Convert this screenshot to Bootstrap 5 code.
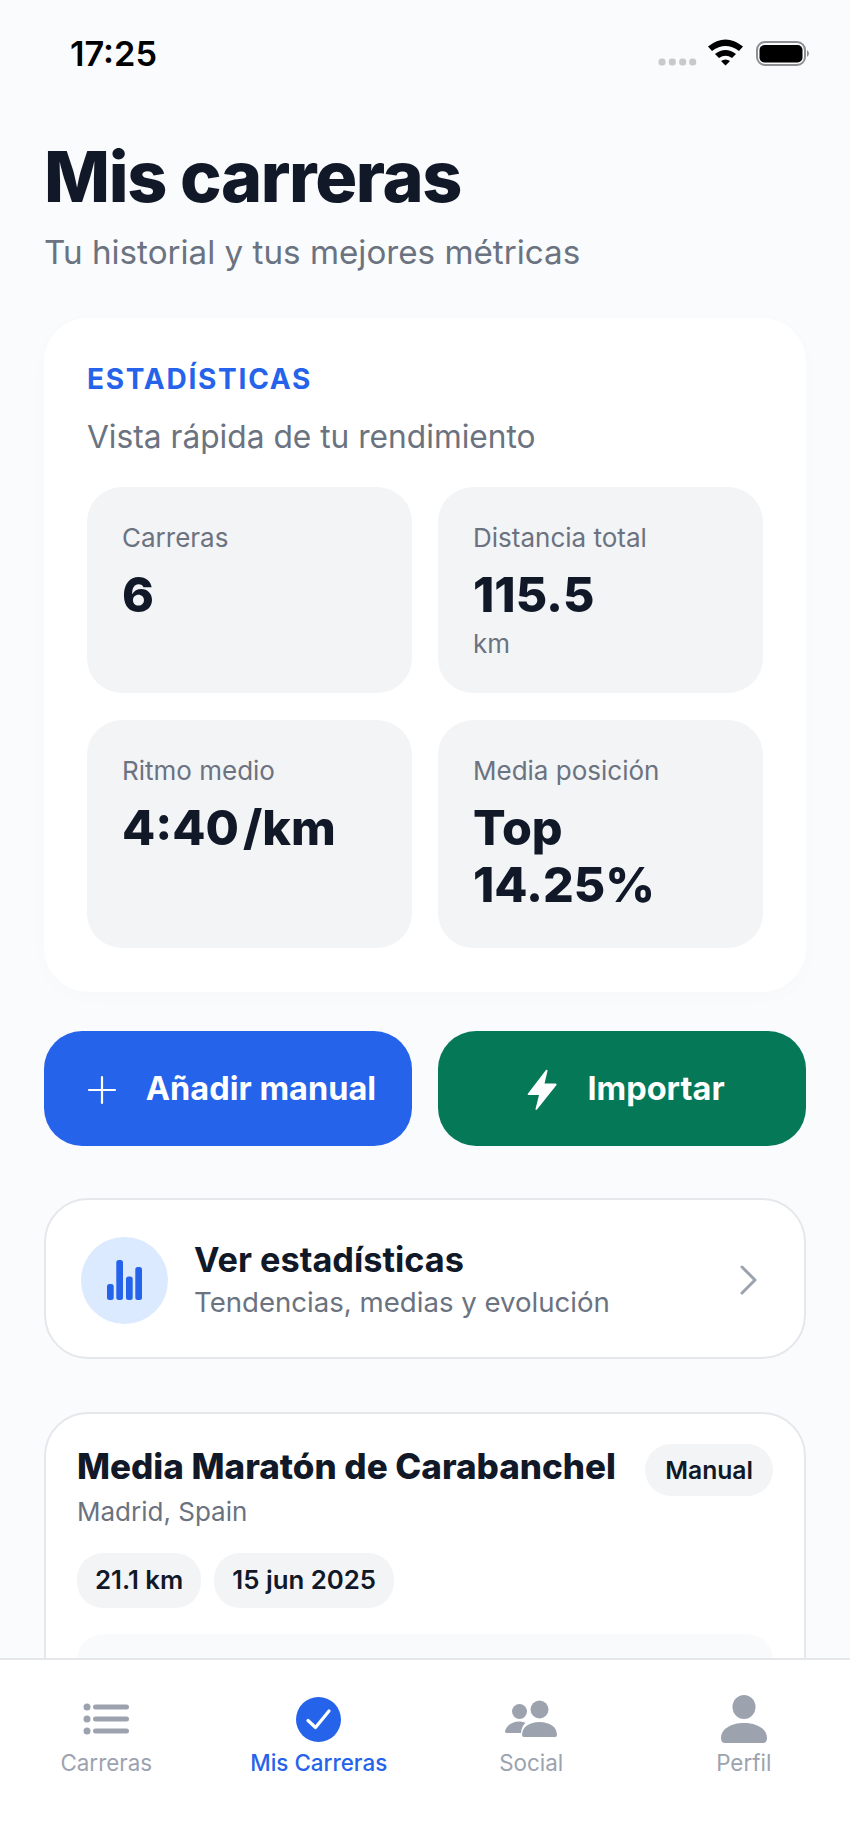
<!DOCTYPE html>
<html lang="es">
<head>
  <meta charset="UTF-8">
  <meta name="viewport" content="width=device-width, initial-scale=1">
  <title>Mis carreras</title>
  <link href="https://cdn.jsdelivr.net/npm/bootstrap@5.3.3/dist/css/bootstrap.min.css" rel="stylesheet">
  <style>
    html, body { height: 1839px; overflow: hidden; }
    body { background: #f9fbfd; font-family: Inter, "Liberation Sans", sans-serif; color: #111827; }
    .phone { height: 1839px; position: relative; overflow: hidden; }
    .status-row { height: 88px; padding: 31px 38px 0 70px; }
    .clock { font-size: 34.300px; font-weight: 600; line-height: 46px; color: #000; }
    .status-icons { margin-top: -1px; padding-top: 6px; }
    .content-area { padding: 0 44px; }
    .page-title { font-size: 70px; font-weight: 800; line-height: 84px; letter-spacing: -1.35px; margin: 47px 0 0; color: #111827; }
    .page-sub { font-size: 33.2px; line-height: 44px; color: #6b7280; margin: 11px 0 0; }
    .stats-card { background: #fff; border-radius: 44px; padding: 44px 43px 44px; margin-top: 44px; box-shadow: 0 4px 22px rgba(17, 24, 39, .015); }
    .eyebrow { font-size: 28px; font-weight: 700; line-height: 34px; letter-spacing: 1.75px; color: #2563eb; }
    .card-hint { font-size: 31.7px; line-height: 40px; color: #6b7280; margin-top: 21px; }
    .stats-grid { display: grid; grid-template-columns: 1fr 1fr; gap: 27px 26px; margin-top: 30px; }
    .stat-box { background: #f3f4f6; border-radius: 35px; padding: 36px 35px 24px; }
    .stat-box.tall-a { height: 206px; }
    .stat-box.tall-b { height: 228px; }
    .stat-label { font-size: 26px; line-height: 30px; color: #6b7280; }
    .stat-value { font-size: 48.300px; font-weight: 800; line-height: 57px; word-spacing: -6.500px; color: #111827; margin-top: 13px; }
    .stat-unit { font-size: 26px; line-height: 30px; color: #6b7280; margin-top: 6px; }
    .action-row { display: grid; grid-template-columns: 1fr 1fr; gap: 26px; margin-top: 39px; }
    .action-btn { height: 115px; border: 0; border-radius: 38px; padding: 2px 0 0 7px; color: #fff; font-size: 32.5px; font-weight: 700; gap: 29px; }
    .action-blue { background: #2563eb; }
    .action-green { background: #047857; }
    .action-blue:hover { background: #2563eb; color: #fff; }
    .action-green:hover { background: #047857; color: #fff; }
    .link-card { height: 161px; margin-top: 52px; background: #fff; border: 2px solid #e5e7eb; border-radius: 44px; padding: 3px 45px 0 35px; gap: 26px; }
    .round-icon { width: 87px; height: 87px; background: #dbeafe; flex: none; }
    .link-title { font-size: 34.3px; font-weight: 700; line-height: 40px; color: #111827; }
    .link-sub { font-size: 27.6px; line-height: 36px; color: #6b7280; margin-top: 4px; }
    .race-card { margin-top: 53px; background: #fff; border: 2px solid #e5e7eb; border-radius: 44px; padding: 30px 31px; height: 420px; }
    .race-title { font-size: 35px; font-weight: 800; line-height: 44px; color: #111827; }
    .race-place { font-size: 26px; line-height: 34px; color: #6b7280; margin-top: 7px; }
    .pill-tag { background: #f3f4f6; border-radius: 26px; font-size: 24.7px; font-weight: 600; color: #111827; line-height: 30px; }
    .pill-source { padding: 11px 20px; flex: none; }
    .pill-row { gap: 13px; margin-top: 24px; }
    .pill-meta { padding: 12px 18px 13px; font-size: 25.8px; }
    .inner-panel { height: 120px; background: #f9fafb; border-radius: 26px; margin-top: 26px; }
    .tab-bar { position: absolute; left: 0; right: 0; top: 1658px; bottom: 0; background: #fff; border-top: 2px solid #e5e7eb; }
    .tab-item { width: 212.5px; color: #9ca3af; font-size: 22.4px; line-height: 28px; }
    .tab-icon { height: 56px; margin-top: 31px; }
    .tab-icon svg { display: block; }
    .tab-active { color: #2563eb; font-weight: 500; }
    .tab-text { margin-top: 2px; }
  </style>
</head>
<body>
  <script src="https://cdn.jsdelivr.net/npm/bootstrap@5.3.3/dist/js/bootstrap.bundle.min.js"></script>

  <div class="phone">
    <div class="status-row d-flex justify-content-between align-items-start">
      <div class="clock">17:25</div>
      <div class="status-icons d-flex align-items-center gap-2">
        <svg width="172" height="34" viewBox="0 0 172 34">
          <g fill="#c9c9cb">
            <rect x="18.500" y="22.500" width="7" height="7" rx="3"/><rect x="28.800" y="22.500" width="7" height="7" rx="3"/><rect x="39.200" y="22.500" width="7" height="7" rx="3"/><rect x="49.200" y="22.500" width="7" height="7" rx="3"/>
          </g>
          <path d="M68 10.500Q85.500-3.500 103 10.500L99 15Q85.500 5 72 15ZM75 18Q85.500 10 96 18L92 22Q85.500 17.500 79 22ZM81 25Q85.500 22 90 25L85.500 29.500Z" fill="#000"/>
          <rect x="117" y="6" width="48" height="23" rx="8" fill="none" stroke="#8e8e93" stroke-width="2"/>
          <rect x="119.500" y="9" width="43" height="17.500" rx="5" fill="#000"/>
          <path d="M167 14Q171 17.500 167 21Z" fill="#8e8e93"/>
        </svg>
      </div>
    </div>

    <div class="content-area">
      <h1 class="page-title">Mis carreras</h1>
      <p class="page-sub">Tu historial y tus mejores métricas</p>

      <div class="stats-card">
        <div class="eyebrow">ESTADÍSTICAS</div>
        <div class="card-hint">Vista rápida de tu rendimiento</div>
        <div class="stats-grid">
          <div class="stat-box tall-a">
            <div class="stat-label">Carreras</div>
            <div class="stat-value">6</div>
          </div>
          <div class="stat-box tall-a">
            <div class="stat-label">Distancia total</div>
            <div class="stat-value">115.5</div>
            <div class="stat-unit">km</div>
          </div>
          <div class="stat-box tall-b">
            <div class="stat-label">Ritmo medio</div>
            <div class="stat-value">4:40 /km</div>
          </div>
          <div class="stat-box tall-b">
            <div class="stat-label">Media posición</div>
            <div class="stat-value">Top 14.25%</div>
          </div>
        </div>
      </div>

      <div class="action-row">
        <button type="button" class="btn action-btn action-blue d-flex align-items-center justify-content-center">
          <svg width="30" height="30" viewBox="0 0 30 30"><path d="M15 2V28M2 15H28" stroke="#fff" stroke-width="2.200" stroke-linecap="round"/></svg>
          Añadir manual
        </button>
        <button type="button" class="btn action-btn action-green d-flex align-items-center justify-content-center">
          <svg width="32" height="42" viewBox="0 0 32 42"><path d="M20 1 2 24.500Q1 26 3 26H13L9.500 40Q9.500 41.500 11 40.500L30.500 16Q31 14.500 29.500 14.500H18.500L21.500 2Q21.500 0 20 1Z" fill="#fff"/></svg>
          Importar
        </button>
      </div>

      <div class="link-card d-flex align-items-center">
        <div class="round-icon rounded-circle d-flex align-items-center justify-content-center">
          <svg width="35" height="40" viewBox="0 0 35 40" fill="#2563eb">
            <rect x="0" y="24" width="6.700" height="16" rx="2.500"/><rect x="9.300" y="0" width="6.700" height="40" rx="2.500"/><rect x="19" y="16.500" width="6.700" height="23.500" rx="2.500"/><rect x="28.300" y="7" width="6.700" height="33" rx="2.500"/>
          </svg>
        </div>
        <div class="flex-grow-1">
          <div class="link-title">Ver estadísticas</div>
          <div class="link-sub">Tendencias, medias y evolución</div>
        </div>
        <svg width="20" height="30" viewBox="0 0 20 30"><path d="M3 2 16 15 3 28" fill="none" stroke="#9ca3af" stroke-width="3" stroke-linecap="round" stroke-linejoin="round"/></svg>
      </div>

      <div class="race-card">
        <div class="d-flex justify-content-between align-items-start">
          <div>
            <div class="race-title">Media Maratón de Carabanchel</div>
            <div class="race-place">Madrid, Spain</div>
          </div>
          <div class="pill-tag pill-source">Manual</div>
        </div>
        <div class="pill-row d-flex">
          <div class="pill-tag pill-meta">21.1 km</div>
          <div class="pill-tag pill-meta">15 jun 2025</div>
        </div>
        <div class="inner-panel"></div>
      </div>
    </div>

    <div class="tab-bar d-flex">
      <div class="tab-item text-center">
        <div class="tab-icon d-flex justify-content-center align-items-center">
          <svg width="46" height="34" viewBox="0 0 46 34" fill="#9ca3af">
            <circle cx="4" cy="5" r="3.500"/><circle cx="4" cy="17" r="3.500"/><circle cx="4" cy="29" r="3.500"/>
            <rect x="10" y="2.500" width="36" height="5" rx="2.500"/><rect x="10" y="14.500" width="36" height="5" rx="2.500"/><rect x="10" y="26.500" width="36" height="5" rx="2.500"/>
          </svg>
        </div>
        <div class="tab-text">Carreras</div>
      </div>
      <div class="tab-item text-center tab-active">
        <div class="tab-icon d-flex justify-content-center align-items-center">
          <svg width="45" height="45" viewBox="0 0 45 45"><circle cx="22.500" cy="22.500" r="22.500" fill="#2563eb"/><path d="M12 23.500 19.500 30.500 33 14" fill="none" stroke="#fff" stroke-width="3.200" stroke-linecap="round" stroke-linejoin="round"/></svg>
        </div>
        <div class="tab-text">Mis Carreras</div>
      </div>
      <div class="tab-item text-center">
        <div class="tab-icon d-flex justify-content-center align-items-center">
          <svg width="52" height="38" viewBox="0 0 52 38" fill="#9ca3af">
            <circle cx="14.500" cy="11.500" r="7.500"/><circle cx="34.500" cy="9.500" r="9"/>
            <path d="M0 31.500C1 26 7 21.500 14 21.500C16.500 21.500 19 22 20.500 23C18 25 16.500 28 16 33H2Q0 33 0 31.500Z"/>
            <path d="M17 35C17 27 24.500 22 34.500 22C44.500 22 52 27 52 35Q52 37 50 37H19Q17 37 17 35Z"/>
          </svg>
        </div>
        <div class="tab-text">Social</div>
      </div>
      <div class="tab-item text-center">
        <div class="tab-icon d-flex justify-content-center align-items-center">
          <svg width="46" height="48" viewBox="0 0 46 48" fill="#9ca3af">
            <ellipse cx="23" cy="12" rx="11.500" ry="12"/>
            <path d="M0 43C0 34 10 28 23 28C36 28 46 34 46 43Q46 48 42 48H4Q0 48 0 43Z"/>
          </svg>
        </div>
        <div class="tab-text">Perfil</div>
      </div>
    </div>
  </div>
</body>
</html>
